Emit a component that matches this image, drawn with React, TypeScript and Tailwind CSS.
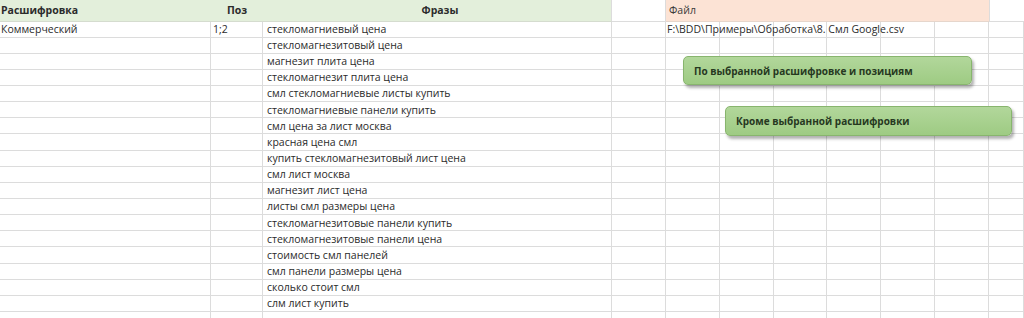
import React from "react";

const phrases = [
  "стекломагниевый цена",
  "стекломагнезитовый цена",
  "магнезит плита цена",
  "стекломагнезит плита цена",
  "смл стекломагниевые листы купить",
  "стекломагниевые панели купить",
  "смл цена за лист москва",
  "красная цена смл",
  "купить стекломагнезитовый лист цена",
  "смл лист москва",
  "магнезит лист цена",
  "листы смл размеры цена",
  "стекломагнезитовые панели купить",
  "стекломагнезитовые панели цена",
  "стоимость смл панелей",
  "смл панели размеры цена",
  "сколько стоит смл",
  "слм лист купить",
  "",
];

const cols = "grid grid-cols-[211px_52px_349px_54px_54px_54px_53px_54px_54px_54px_1fr]";
const cell = "border-r border-b border-[#dcdcdc] overflow-hidden whitespace-nowrap flex items-center";

function Row({ i, phrase }: { i: number; phrase: string }) {
  return (
    <div className={`${cols} h-[16.15px]`}>
      <div className={`${cell} pl-[1px]`}>{i === 0 ? "Коммерческий" : ""}</div>
      <div className={`${cell} pl-[2px]`}>{i === 0 ? "1;2" : ""}</div>
      <div className={`${cell} pl-[4px]`}>{phrase}</div>
      <div className={cell}></div>
      <div className={`${cell} pl-[1px] overflow-visible z-10`}>
        {i === 0 ? "F:\\BDD\\Примеры\\Обработка\\8. Смл Google.csv" : ""}
      </div>
      <div className={cell}></div>
      <div className={cell}></div>
      <div className={cell}></div>
      <div className={cell}></div>
      <div className={cell}></div>
      <div className={cell}></div>
    </div>
  );
}

function Callout({ text, className }: { text: string; className: string }) {
  return (
    <div
      className={`absolute z-20 rounded-[5px] border border-[#88b56e] bg-gradient-to-b from-[#b2d79b] to-[#9ecb83] shadow-[2px_3px_3px_rgba(0,0,0,0.3)] flex items-center pl-[10px] font-bold text-[#26381f] text-[10px] ${className}`}
    >
      {text}
    </div>
  );
}

export default function App() {
  return (
    <div
      className="relative w-[1024px] h-[318px] overflow-hidden bg-white text-[#2b2b2b] text-[10.5px] leading-none"
      style={{ fontFamily: "'Open Sans', 'Noto Sans', sans-serif" }}
    >
      <div className={`${cols} h-[21.5px]`}>
        <div className="bg-[#e3efdb] border-b border-[#d5dccf] font-bold flex items-center pl-[1px]">Расшифровка</div>
        <div className="bg-[#e3efdb] border-b border-[#d5dccf] font-bold flex items-center justify-center">Поз</div>
        <div className="bg-[#e3efdb] border-b border-[#d5dccf] border-r border-r-[#dcdcdc] font-bold flex items-center justify-center pl-[6px]">Фразы</div>
        <div className="border-b border-r border-[#dcdcdc]"></div>
        <div className="col-span-6 bg-[#fce3d5] border-b border-[#e6d6cc] flex items-center pl-[3px] text-[#3a3a3a]">Файл</div>
        <div className="border-b border-l border-[#dcdcdc]"></div>
      </div>
      {phrases.map((p, i) => (
        <Row key={i} i={i} phrase={p} />
      ))}
      <Callout text="По выбранной расшифровке и позициям" className="left-[683px] top-[56px] w-[289px] h-[29px]" />
      <Callout text="Кроме выбранной расшифровки" className="left-[725px] top-[106px] w-[287px] h-[30px]" />
    </div>
  );
}
